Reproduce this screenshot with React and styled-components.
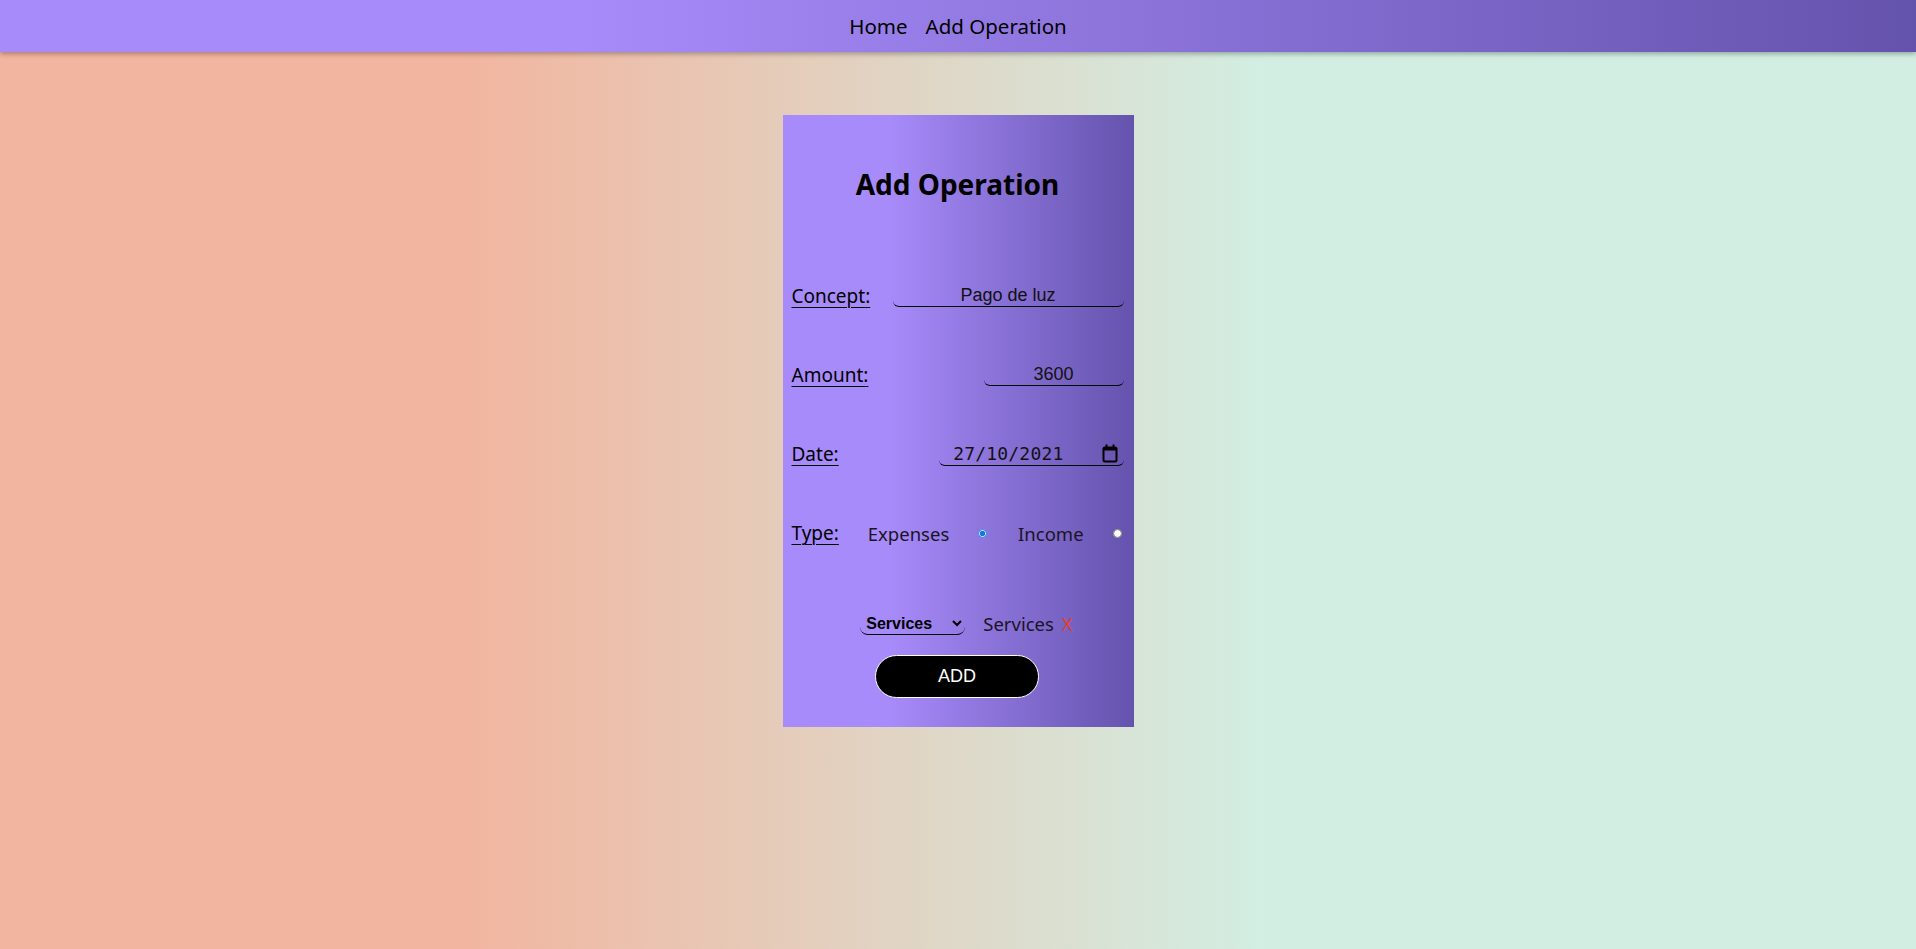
import React, { useState } from "react";
import styled, { createGlobalStyle } from "styled-components";

const GlobalStyle = createGlobalStyle`
  * { box-sizing: border-box; }
  html, body { margin: 0; padding: 0; }
  body {
    min-height: 100vh;
    font-family: "Noto Sans", "Open Sans", sans-serif;
    background: linear-gradient(to right, #f2b59f 24%, #d2eee2 66%);
  }
`;

const Nav = styled.nav`
  height: 52px;
  display: flex;
  align-items: center;
  justify-content: center;
  gap: 18px;
  background: linear-gradient(to right, #a88bfa 30%, #6453ad 100%);
  box-shadow: 0 2px 5px rgba(0, 0, 0, 0.3);
`;

const NavLink = styled.a`
  font-size: 20.5px;
  color: #000;
  text-decoration: none;
  cursor: pointer;
`;

const Page = styled.main`
  display: flex;
  justify-content: center;
  padding-top: 63px;
  padding-bottom: 40px;
`;

const Card = styled.form`
  width: 351px;
  height: 612px;
  display: flex;
  flex-direction: column;
  padding: 52px 10px 0 9px;
  background: linear-gradient(to right, #a88bfa 30%, #6453ad 100%);
`;

const Title = styled.h1`
  margin: 0 0 82px;
  font-size: 28px;
  line-height: 34px;
  font-weight: 700;
  text-align: center;
  color: #000;
`;

const Row = styled.div`
  height: 26px;
  display: flex;
  align-items: center;
  justify-content: space-between;
  margin-bottom: 53px;
`;

const Label = styled.label`
  font-size: 19px;
  line-height: 26px;
  color: #000;
  text-decoration: underline;
  text-underline-offset: 4px;
  text-decoration-thickness: 1px;
`;

const TextInput = styled.input`
  width: ${(p) => p.$w}px;
  height: 22px;
  padding: 0;
  border: none;
  border-bottom: 1px solid #000;
  border-radius: 6px;
  background: transparent;
  font-family: "Liberation Sans", Arial, sans-serif;
  font-size: 18px;
  color: #111;
  text-align: center;
  outline: none;
`;

const DateField = styled.div`
  width: 185px;
  height: 24px;
  display: flex;
  align-items: center;
  justify-content: flex-end;
  gap: 38px;
  padding-right: 6px;
  border-bottom: 1px solid #000;
  border-radius: 6px;
`;

const DateText = styled.span`
  font-family: "DejaVu Sans Mono", "Liberation Mono", monospace;
  font-size: 18px;
  color: #111;
  letter-spacing: 0.2px;
`;

const Option = styled.span`
  font-size: 18.5px;
  font-weight: 400;
  color: #1a1426;
`;

const Radio = styled.input`
  width: 9px;
  height: 9px;
  margin: 0 2px 0 0;
  accent-color: #1a73e8;
`;

const CategoryRow = styled.div`
  display: flex;
  align-items: center;
  justify-content: center;
  gap: 18px;
  margin-top: 12px;
  padding-left: 18px;
`;

const Select = styled.select`
  width: 105px;
  height: 23px;
  padding: 0 2px;
  border: none;
  border-bottom: 1px solid #000;
  border-radius: 8px;
  background: transparent;
  font-family: "Liberation Sans", Arial, sans-serif;
  font-size: 16px;
  font-weight: 700;
  color: #000;
  outline: none;
`;

const Tag = styled.span`
  display: flex;
  align-items: center;
  gap: 8px;
  font-size: 18.5px;
  font-weight: 400;
  color: #1a1426;
`;

const Remove = styled.span`
  color: #e0402a;
  font-size: 18.5px;
  cursor: pointer;
`;

const AddButton = styled.button`
  align-self: center;
  width: 164px;
  height: 43px;
  margin-top: 19px;
  margin-right: 1px;
  border: 1px solid #fff;
  border-radius: 22px;
  background: #000;
  color: #fff;
  font-family: "Liberation Sans", Arial, sans-serif;
  font-size: 18px;
  cursor: pointer;
`;

function CalendarIcon() {
  return (
    <svg width="16" height="19" viewBox="0 0 16 19" fill="none">
      <rect x="1.5" y="3.5" width="13" height="14" rx="1.5" stroke="#000" strokeWidth="2" />
      <rect x="1.5" y="3.5" width="13" height="3" fill="#000" />
      <rect x="3.5" y="0.5" width="2" height="4" fill="#000" />
      <rect x="10.5" y="0.5" width="2" height="4" fill="#000" />
    </svg>
  );
}

export default function App() {
  const [type, setType] = useState("expenses");

  return (
    <>
      <GlobalStyle />
      <Nav>
        <NavLink>Home</NavLink>
        <NavLink>Add Operation</NavLink>
      </Nav>
      <Page>
        <Card onSubmit={(e) => e.preventDefault()}>
          <Title>Add Operation</Title>
          <Row>
            <Label>Concept:</Label>
            <TextInput $w={231} defaultValue="Pago de luz" />
          </Row>
          <Row>
            <Label>Amount:</Label>
            <TextInput $w={140} defaultValue="3600" />
          </Row>
          <Row>
            <Label>Date:</Label>
            <DateField>
              <DateText>27/10/2021</DateText>
              <CalendarIcon />
            </DateField>
          </Row>
          <Row>
            <Label>Type:</Label>
            <Option>Expenses</Option>
            <Radio
              type="radio"
              name="type"
              checked={type === "expenses"}
              onChange={() => setType("expenses")}
            />
            <Option>Income</Option>
            <Radio
              type="radio"
              name="type"
              checked={type === "income"}
              onChange={() => setType("income")}
            />
          </Row>
          <CategoryRow>
            <Select defaultValue="services">
              <option value="services">Services</option>
              <option value="food">Food</option>
              <option value="other">Other</option>
            </Select>
            <Tag>
              Services <Remove>X</Remove>
            </Tag>
          </CategoryRow>
          <AddButton type="submit">ADD</AddButton>
        </Card>
      </Page>
    </>
  );
}
